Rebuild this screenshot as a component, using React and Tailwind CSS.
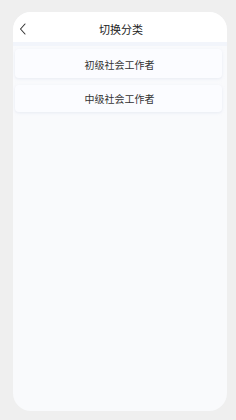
import React from "react";

export default function App() {
  return (
    <div
      className="w-[236px] h-[420px] bg-[#efefef] pl-[13px] pr-[9px] pt-[12px] pb-[9px]"
      style={{ fontFamily: '"Noto Sans CJK SC", "Noto Sans", sans-serif' }}
    >
      <div className="h-full w-full rounded-[18px] bg-[#f9fafc] overflow-hidden flex flex-col">
        <div className="h-[30px] bg-white flex items-center relative shrink-0 pt-[4px]">
          <svg
            className="absolute left-[6px] top-[11px]"
            width="8"
            height="12"
            viewBox="0 0 8 12"
            fill="none"
          >
            <path d="M6 1 L1.5 6 L6 11" stroke="#333" strokeWidth="1.1" strokeLinecap="round" strokeLinejoin="round" />
          </svg>
          <div className="w-full text-center text-[11px] text-[#222] leading-none pl-[2px]">切换分类</div>
        </div>
        <div className="h-[4px] bg-[#f2f5fb] shrink-0" />
        <div className="flex flex-col gap-[7px] pl-[2px] pr-[5px] pt-[3px]">
          <div className="h-[29px] rounded-[4px] bg-[#fbfcff] shadow-[0_1px_3px_rgba(200,210,230,0.35)] flex items-center justify-center text-[10px] text-[#333] pt-[1px] pl-[2px]">
            初级社会工作者
          </div>
          <div className="h-[27px] rounded-[4px] bg-[#fbfcff] shadow-[0_1px_3px_rgba(200,210,230,0.35)] flex items-center justify-center text-[10px] text-[#333] pl-[2px]">
            中级社会工作者
          </div>
        </div>
      </div>
    </div>
  );
}
